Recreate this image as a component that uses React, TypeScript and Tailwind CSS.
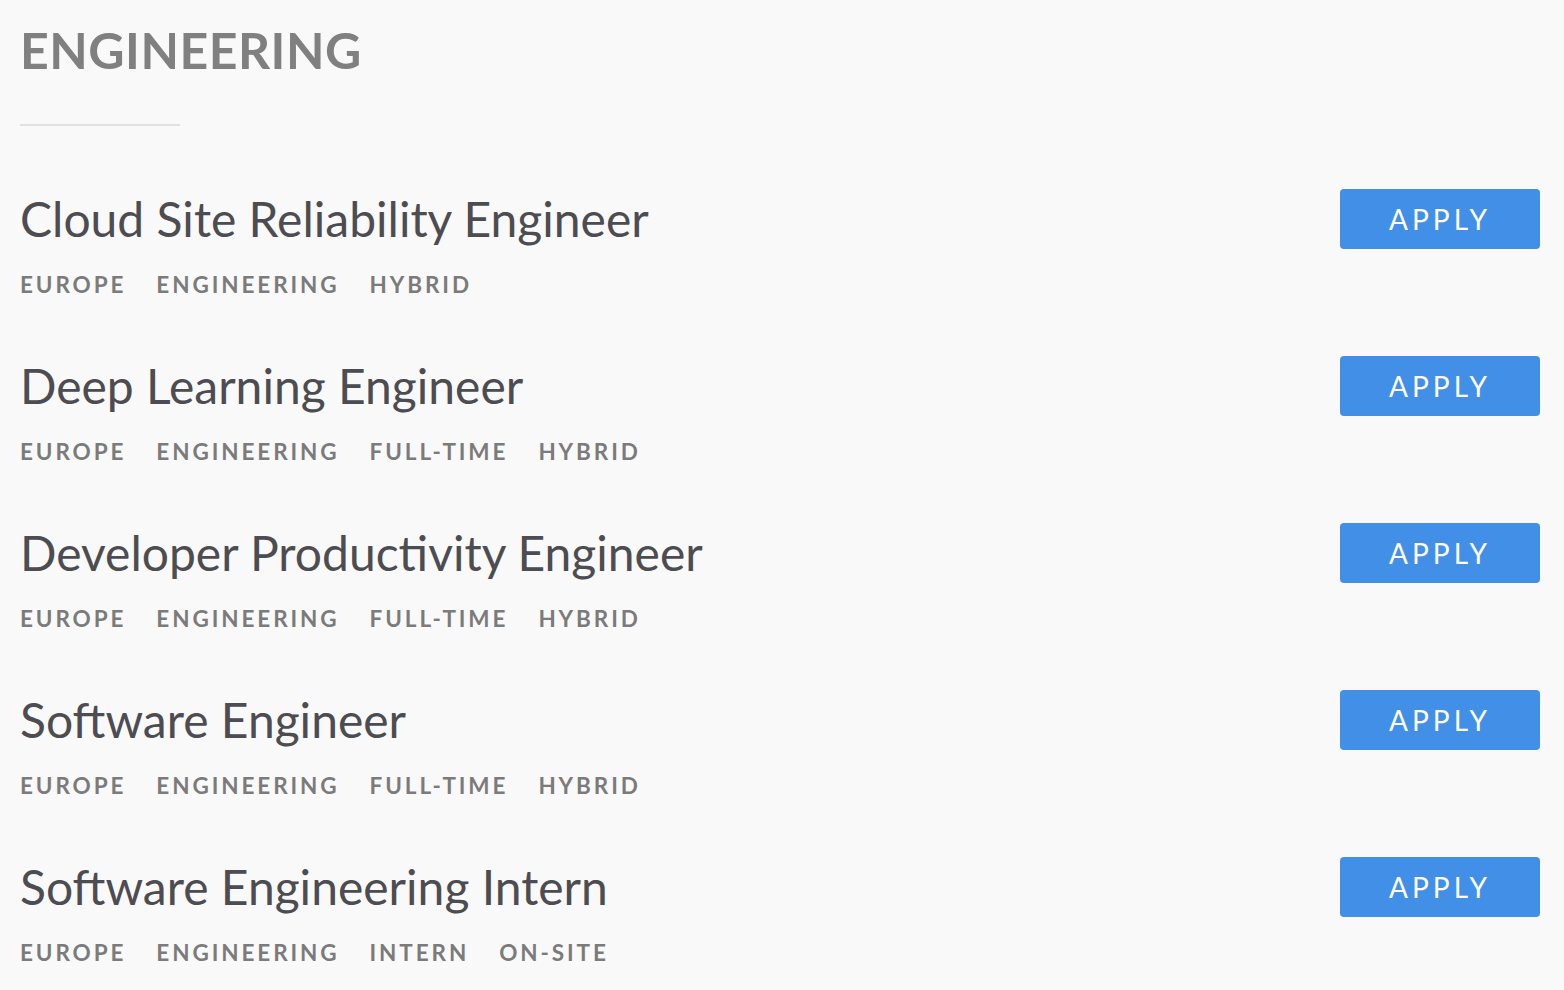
const jobs = [
  { title: "Cloud Site Reliability Engineer", tags: ["Europe", "Engineering", "Hybrid"] },
  { title: "Deep Learning Engineer", tags: ["Europe", "Engineering", "Full-time", "Hybrid"] },
  { title: "Developer Productivity Engineer", tags: ["Europe", "Engineering", "Full-time", "Hybrid"] },
  { title: "Software Engineer", tags: ["Europe", "Engineering", "Full-time", "Hybrid"] },
  { title: "Software Engineering Intern", tags: ["Europe", "Engineering", "Intern", "On-site"] },
];

export default function App() {
  return (
    <div className="min-h-screen bg-[#f9f9f9] pl-[20px] pr-[24px] pt-[25px] font-['Lato',sans-serif]">
      <h2 className="text-[50px] font-bold uppercase leading-none tracking-[0.5px] text-[#808080]">
        Engineering
      </h2>
      <div className="mt-[49px] h-[2px] w-[160px] bg-[#e1e1e1]" />

      <ul className="mt-[63px] flex flex-col gap-[60px]">
        {jobs.map((job) => (
          <li key={job.title} className="flex items-start justify-between">
            <div className="pt-[6px]">
              <h3 className="text-[48px] leading-none text-[#4c4c51]">{job.title}</h3>
              <div className="mt-[31px] flex gap-[30px] text-[22.5px] font-bold uppercase leading-[22px] tracking-[2.9px] text-[#7b7b7b]">
                {job.tags.map((tag) => (
                  <span key={tag}>{tag}</span>
                ))}
              </div>
            </div>
            <button className="flex h-[60px] w-[200px] items-center justify-center rounded-[4px] bg-[#428fe8] text-[28px] uppercase tracking-[4px] text-white">
              Apply
            </button>
          </li>
        ))}
      </ul>
    </div>
  );
}
